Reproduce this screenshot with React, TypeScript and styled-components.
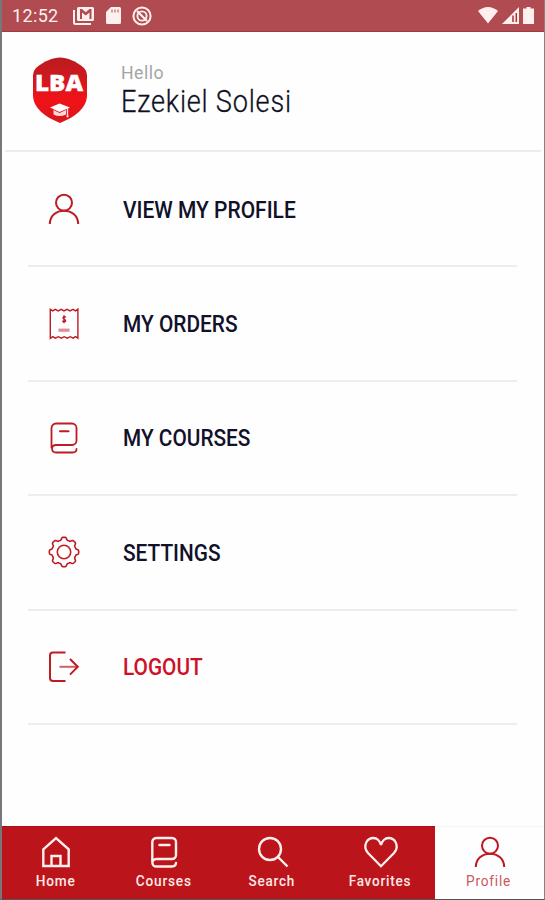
import React from "react";
import styled, { createGlobalStyle } from "styled-components";

const GlobalStyle = createGlobalStyle`
  *, *::before, *::after { box-sizing: border-box; }
  body { margin: 0; background: #fefefe; font-family: Roboto, "Liberation Sans", sans-serif; }
  svg { display: block; overflow: visible; }
`;

const Screen = styled.div`
  width: 545px;
  height: 900px;
  display: flex;
  flex-direction: column;
  overflow: hidden;
  background: #fefefe;
  border-left: 2px solid #77777a;
  border-right: 1px solid #858585;
  border-bottom: 1px solid #555;
`;

const StatusBar = styled.header`
  flex: 0 0 32px;
  margin-left: -2px;
  margin-right: -1px;
  padding: 0 11px 0 10px;
  display: flex;
  align-items: center;
  color: #fff0ee;
  background: #b04b51;
  border-left: 2px solid #8d343b;
  border-bottom: 1px solid #a43a41;
`;

const Clock = styled.div`
  width: 61px;
  padding-top: 1px;
  font-size: 18px;
  line-height: 30px;
  letter-spacing: 0.35px;
`;

const StatusIcons = styled.div<{ $gap: number; $end?: boolean }>`
  display: flex;
  align-items: center;
  gap: ${(p) => p.$gap}px;
  margin-left: ${(p) => (p.$end ? "auto" : "0")};
`;

const ProfileHeader = styled.section`
  flex: 0 0 120px;
  margin: 0 3px;
  padding-left: 27px;
  display: flex;
  border-bottom: 2px solid #ececec;
`;

const LogoSlot = styled.div`
  width: 89px;
  padding-top: 25px;
`;

const Greeting = styled.div`
  padding-top: 31px;
`;

const Condensed = styled.span<{ $scale: number; $origin?: string }>`
  display: inline-block;
  white-space: nowrap;
  transform: scaleX(${(p) => p.$scale});
  transform-origin: ${(p) => p.$origin ?? "left"} center;
`;

const Hello = styled.div`
  font-size: 18px;
  line-height: 20px;
  letter-spacing: 0.5px;
  color: #a5a5a5;
`;

const Name = styled.div`
  font-size: 31px;
  line-height: 38px;
  font-weight: 300;
  letter-spacing: 0.9px;
  color: #10101f;
  -webkit-text-stroke: 0.3px currentColor;
`;

const Menu = styled.nav`
  flex: 1;
  padding: 1px 27px 0 26px;
`;

const MenuRow = styled.div<{ $danger?: boolean }>`
  height: 114.4px;
  display: flex;
  align-items: center;
  border-bottom: 2px solid #ededed;
  font-size: 24.5px;
  font-weight: 500;
  color: ${(p) => (p.$danger ? "#cf1029" : "#11112a")};
`;

const RowIcon = styled.div`
  width: 95px;
  padding-left: 20px;
  color: #bf1b23;
`;

const TabBar = styled.nav`
  flex: 0 0 73px;
  margin-left: -2px;
  display: flex;
  background: #bc141b;
  border-left: 2px solid #780a10;
`;

const Tab = styled.div<{ $active?: boolean; $width?: number }>`
  flex: 0 0 ${(p) => p.$width ?? 108.25}px;
  padding-top: 10px;
  display: flex;
  flex-direction: column;
  align-items: center;
  color: ${(p) => (p.$active ? "#bd1720" : "#fff0ee")};
  background: ${(p) => (p.$active ? "#fefefe" : "transparent")};
  box-shadow: inset 0 1px 0 ${(p) => (p.$active ? "#f5f5f5" : "#a81017")};
`;

const TabLabel = styled.div<{ $active?: boolean }>`
  margin-top: 3px;
  margin-left: -1px;
  font-size: 15.5px;
  line-height: 20px;
  font-weight: ${(p) => (p.$active ? 400 : 500)};
  letter-spacing: 0.9px;
  color: ${(p) => (p.$active ? "#c95860" : "#ffe9e7")};
`;

const stroke = { fill: "none", stroke: "currentColor", strokeWidth: 2 } as const;

const UserIcon = () => (
  <svg width="32" height="32" viewBox="0 0 32 32" {...stroke}>
    <circle cx="16" cy="9.7" r="8" />
    <path d="M1.8 31C2 23 8 17.7 16 17.7S30 23 30.2 31" />
  </svg>
);

const ReceiptIcon = () => (
  <svg width="32" height="32" viewBox="0 0 32 32" {...stroke} strokeWidth={1.4}>
    <path d="M2.3 1.2v29.2l2.5-1.7 2.5 1.5 3-1.5 3 1.5 2.9-1.5 3 1.5 3-1.5 3 1.5 2.3-1.5 2.4 1.5V1.2l-2.4 1.7-2.5-1.5-3 1.5-3-1.5-3 1.5-2.8-1.5-3 1.5-3-1.5-2.4 1.5z" />
    <path d="M18 9.2c-2.7-1.3-4 .6-2 1.8s3 3.5-1.8 2.3M16 7.3v8" />
    <path d="M10.5 22.2h11" strokeWidth="3.2" opacity=".5" />
  </svg>
);

const BookIcon = () => (
  <svg width="32" height="32" viewBox="0 0 32 32" {...stroke} strokeWidth={1.8} strokeLinecap="round">
    <path d="M3.500 25.500V6A4.500 4.500 0 0 1 8 1.500H24A4.500 4.500 0 0 1 28.500 6v12.500A4.500 4.500 0 0 1 24 23H8c-5 0-5.500 7.500 0 7.500h16.500c2.500 0 4-1 4-3.500" />
    <path d="M12 9.300h8.500" strokeWidth="2" />
  </svg>
);

const gearPath = (() => {
  const points: string[] = [];
  for (let i = 0; i <= 160; i++) {
    const a = (i / 160) * Math.PI * 2;
    const r = 13.4 + 1.3 * Math.tanh(2.4 * Math.cos(a * 8));
    points.push(`${(16 + r * Math.cos(a)).toFixed(2)} ${(16 + r * Math.sin(a)).toFixed(2)}`);
  }
  return `M${points.join("L")}Z`;
})();

const GearIcon = () => (
  <svg width="32" height="32" viewBox="0 0 32 32" {...stroke} strokeWidth={1.6}>
    <path d={gearPath} />
    <circle cx="16" cy="16" r="6.7" />
  </svg>
);

const LogoutIcon = () => (
  <svg width="32" height="32" viewBox="0 0 32 32" {...stroke}>
    <path d="M17.500 1.500H5Q2 1.500 2 4.500v22.500q0 3 3 3H17.500M22 8l7.800 7.800L22 23.600" />
    <path d="M11.500 15.800h18" opacity=".7" />
  </svg>
);

const HomeIcon = () => (
  <svg width="32" height="32" viewBox="0 0 32 32" {...stroke} strokeWidth={2.4}>
    <path d="M3.300 13.300 16 2l12.700 11.300V30H3.300zM11.500 30V20h9v10" />
  </svg>
);

const NavBookIcon = () => (
  <svg width="32" height="32" viewBox="0 0 32 32" {...stroke} strokeWidth={2.4} strokeLinecap="round">
    <path d="M4.300 26V6A4 4 0 0 1 8.300 2H24a4 4 0 0 1 4 4v13a4 4 0 0 1-4 4H8.500c-5.500 0-5.500 7.500 0 7.500H24c2.500 0 3.800-1 4-3.500M11.500 9h10" />
  </svg>
);

const SearchIcon = () => (
  <svg width="32" height="32" viewBox="0 0 32 32" {...stroke} strokeWidth={2.4}>
    <circle cx="13" cy="13" r="11" />
    <path d="m21 21 9.500 9.500" />
  </svg>
);

const HeartIcon = () => (
  <svg width="34" height="32" viewBox="0 0 34 32" {...stroke} strokeWidth={2.3}>
    <path d="M17 30.200 4 17C-2 10 3 2 9.500 2 13 2 16 5 17 9c1-4 4-7 7.500-7C31 2 36 10 30 17z" />
  </svg>
);

const BrandLogo = () => (
  <svg width="56" height="68" viewBox="0 0 56 68">
    <defs>
      <linearGradient id="shield" x1="0" y1="0" x2="0" y2="1">
        <stop offset="0" stopColor="#b91b20" />
        <stop offset=".35" stopColor="#d3181e" />
        <stop offset=".65" stopColor="#f11219" />
        <stop offset="1" stopColor="#d7161b" />
      </linearGradient>
    </defs>
    <path d="M28 .5C35 .5 44 4 52 11Q55 14 55 18v20c0 13-12 22-27 28C13 60 1 51 1 38V18q0-4 3-7C12 4 21 .5 28 .5Z" fill="url(#shield)" />
    <text x="3" y="34" fill="#fff" stroke="#fff" strokeWidth=".4" fontFamily="Open Sans, sans-serif" fontWeight="800" fontSize="22" textLength="48" lengthAdjust="spacingAndGlyphs">LBA</text>
    <path d="m18 50.500 9.500-4L38 50.500l-10.500 4.500z" fill="#fff" />
    <path d="M21.500 53v4.500q6 3 12.500 0V53l-6.500 3z" fill="#fbd8d6" />
    <path d="M35.500 51v8M34.500 59.500h2" stroke="#fde4e2" strokeWidth="1.300" />
  </svg>
);

const MailStatusIcon = () => (
  <svg width="22" height="18" viewBox="0 0 22 18" fill="currentColor">
    <path d="M1 3v12.500q0 1.500 1.500 1.500H18" fill="none" stroke="currentColor" strokeWidth="2" />
    <path fillRule="evenodd" d="M5.500 0h14Q21 0 21 1.500v11q0 1.500-1.500 1.500h-14Q4 14 4 12.500v-11Q4 0 5.500 0ZM7 2v10h2V5.500l3.700 3 3.800-3V12h2V2h-2l-3.800 3.300L9 2Z" />
  </svg>
);

const CardStatusIcon = () => (
  <svg width="15" height="17" viewBox="0 0 15 17" fill="currentColor">
    <path fillRule="evenodd" d="M5 0h8.500Q15 0 15 1.500v14q0 1.500-1.500 1.500h-12Q0 17 0 15.500V5ZM5.500 2.500v3h1V2.500ZM8.500 2.500v3h1V2.500ZM11.500 2.500v3h1V2.500Z" />
  </svg>
);

const SyncStatusIcon = () => (
  <svg width="20" height="20" viewBox="0 0 20 20" {...stroke}>
    <circle cx="10" cy="10" r="8.600" />
    <circle cx="10" cy="10" r="4.600" strokeWidth="1.900" />
    <path d="m5 5 10 10" strokeWidth="2.100" />
  </svg>
);

const WifiStatusIcon = () => (
  <svg width="20" height="17" viewBox="0 0 20 17" fill="currentColor">
    <path d="M0 4Q10-4 20 4L10 16.500Z" />
  </svg>
);

const SignalStatusIcon = () => (
  <svg width="17" height="17" viewBox="0 0 17 17">
    <path d="M17 0v17H0Z" fill="currentColor" />
    <path d="M11 8.500v6.500M14.300 6v9" stroke="#a7333b" strokeWidth="1.500" />
  </svg>
);

const BatteryStatusIcon = () => (
  <svg width="11" height="17" viewBox="0 0 11 17" fill="currentColor">
    <path d="M3.500 0h4v1.500H11V17H0V1.500h3.500Z" />
  </svg>
);

const menuItems = [
  { label: "VIEW MY PROFILE", Icon: UserIcon, scale: 0.856 },
  { label: "MY ORDERS", Icon: ReceiptIcon, scale: 0.852 },
  { label: "MY COURSES", Icon: BookIcon, scale: 0.85 },
  { label: "SETTINGS", Icon: GearIcon, scale: 0.85 },
  { label: "LOGOUT", Icon: LogoutIcon, scale: 0.85, danger: true },
];

const tabs = [
  { label: "Home", Icon: HomeIcon, scale: 0.88 },
  { label: "Courses", Icon: NavBookIcon, scale: 0.88 },
  { label: "Search", Icon: SearchIcon, scale: 0.87 },
  { label: "Favorites", Icon: HeartIcon, scale: 0.87 },
  { label: "Profile", Icon: UserIcon, scale: 0.88, active: true },
];

export default function App() {
  return (
    <>
      <GlobalStyle />
      <Screen>
        <StatusBar>
          <Clock><Condensed $scale={1}>12:52</Condensed></Clock>
          <StatusIcons $gap={11}>
            <MailStatusIcon />
            <CardStatusIcon />
            <SyncStatusIcon />
          </StatusIcons>
          <StatusIcons $gap={4} $end>
            <WifiStatusIcon />
            <SignalStatusIcon />
            <BatteryStatusIcon />
          </StatusIcons>
        </StatusBar>
        <ProfileHeader>
          <LogoSlot><BrandLogo /></LogoSlot>
          <Greeting>
            <Hello><Condensed $scale={0.98}>Hello</Condensed></Hello>
            <Name><Condensed $scale={0.875}>Ezekiel Solesi</Condensed></Name>
          </Greeting>
        </ProfileHeader>
        <Menu>
          {menuItems.map(({ label, Icon, scale, danger }) => (
            <MenuRow key={label} $danger={danger}>
              <RowIcon><Icon /></RowIcon>
              <Condensed $scale={scale}>{label}</Condensed>
            </MenuRow>
          ))}
        </Menu>
        <TabBar>
          {tabs.map(({ label, Icon, scale, active }) => (
            <Tab key={label} $active={active} $width={active ? 109 : undefined}>
              <Icon />
              <TabLabel $active={active}><Condensed $scale={scale} $origin="center">{label}</Condensed></TabLabel>
            </Tab>
          ))}
        </TabBar>
      </Screen>
    </>
  );
}
